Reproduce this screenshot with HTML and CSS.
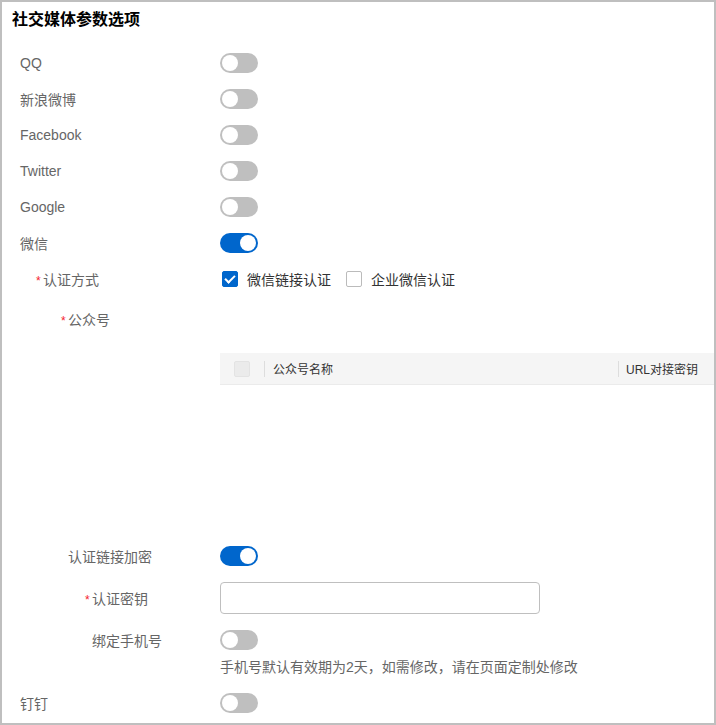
FILE: index.html
```html
<!DOCTYPE html>
<html lang="zh-CN">
<head>
  <meta charset="UTF-8">
  <meta name="viewport" content="width=device-width, initial-scale=1.0">
  <title>社交媒体参数选项</title>
  <link rel="stylesheet" href="styles.css">
</head>
<body>
  <div class="panel">
    <h1>社交媒体参数选项</h1>

    <div class="form-item">
      <label class="form-label">QQ</label>
      <span class="switch"></span>
    </div>
    <div class="form-item">
      <label class="form-label">新浪微博</label>
      <span class="switch"></span>
    </div>
    <div class="form-item">
      <label class="form-label">Facebook</label>
      <span class="switch"></span>
    </div>
    <div class="form-item">
      <label class="form-label">Twitter</label>
      <span class="switch"></span>
    </div>
    <div class="form-item">
      <label class="form-label">Google</label>
      <span class="switch"></span>
    </div>
    <div class="form-item">
      <label class="form-label">微信</label>
      <span class="switch on"></span>
    </div>

    <!-- 微信子选项 -->
    <div class="form-item">
      <label class="form-label indent-1"><span class="req">*</span>认证方式</label>
      <div class="check-group">
        <span class="checkbox checked"></span>
        <span class="check-text">微信链接认证</span>
        <span class="checkbox"></span>
        <span class="check-text">企业微信认证</span>
      </div>
    </div>

    <div class="form-block">
      <label class="form-label indent-2"><span class="req">*</span>公众号</label>
      <div class="table-wrap">
        <div class="table-head">
          <div class="cell cell-check"><span class="checkbox disabled"></span></div>
          <div class="cell cell-name">公众号名称</div>
          <div class="cell cell-key">URL对接密钥</div>
        </div>
        <div class="table-body"></div>
      </div>
    </div>

    <div class="form-item">
      <label class="form-label indent-2">认证链接加密</label>
      <span class="switch on"></span>
    </div>
    <div class="form-item spaced">
      <label class="form-label indent-3"><span class="req">*</span>认证密钥</label>
      <input type="text" class="text-input">
    </div>
    <div class="form-item spaced">
      <label class="form-label indent-3">绑定手机号</label>
      <span class="switch"></span>
    </div>
    <div class="hint">手机号默认有效期为2天，如需修改，请在页面定制处修改</div>

    <div class="form-item last">
      <label class="form-label">钉钉</label>
      <span class="switch"></span>
    </div>
  </div>
</body>
</html>
```

FILE: styles.css
```css
html, body {
  margin: 0;
  padding: 0;
  background-color: #fff;
}
body {
  font-family: "Liberation Sans", Arial, "Noto Sans CJK SC", sans-serif;
  font-size: 14px;
  color: #666;
}
.panel {
  box-sizing: border-box;
  width: 716px;
  height: 725px;
  border: 2px solid #bfbfbf;
  overflow: hidden;
}
h1 {
  margin: 0 0 7px;
  padding-left: 10px;
  height: 36px;
  line-height: 36px;
  font-size: 16px;
  font-weight: bold;
  color: #000;
}
.form-item {
  display: flex;
  align-items: center;
  height: 36px;
}
.form-item.spaced {
  margin-top: 6px;
}
.form-item.last {
  margin-top: 9px;
}
.form-label {
  box-sizing: border-box;
  width: 218px;
  padding-left: 18px;
  flex-shrink: 0;
  color: #666;
}
.form-label.indent-1 {
  padding-left: 41px;
}
.form-label.indent-2 {
  padding-left: 66px;
}
.form-label.indent-3 {
  padding-left: 90px;
}
.req {
  display: inline-block;
  width: 7px;
  margin-left: -7px;
  color: #f5222d;
  font-size: 12px;
}
.switch {
  position: relative;
  display: inline-block;
  width: 38px;
  height: 20px;
  border-radius: 10px;
  background-color: #bfbfbf;
}
.switch::after {
  content: "";
  position: absolute;
  top: 2px;
  left: 2px;
  width: 16px;
  height: 16px;
  border-radius: 50%;
  background-color: #fff;
}
.switch.on {
  background-color: #0066cc;
}
.switch.on::after {
  left: 20px;
}
.check-group {
  display: flex;
  align-items: center;
  padding-left: 2px;
}
.checkbox {
  box-sizing: border-box;
  display: inline-block;
  position: relative;
  width: 16px;
  height: 16px;
  border: 1px solid #bbb;
  border-radius: 2px;
  background-color: #fff;
}
.checkbox.checked {
  border-color: #0066cc;
  background-color: #0066cc;
}
.checkbox.checked::after {
  content: "";
  position: absolute;
  left: 4px;
  top: 1px;
  width: 4px;
  height: 8px;
  border: solid #fff;
  border-width: 0 2px 2px 0;
  transform: rotate(45deg);
}
.checkbox.disabled {
  border-color: #e3e3e3;
  background-color: #ebebeb;
}
.check-text {
  margin: 0 15px 0 9px;
  color: #333;
}
.form-block {
  padding-top: 5px;
}
.form-block .form-label {
  display: block;
  height: 36px;
  line-height: 36px;
}
.table-wrap {
  margin: 15px 0 0 218px;
  height: 185px;
}
.table-head {
  display: flex;
  align-items: center;
  height: 31px;
  background-color: #f5f5f5;
  border-bottom: 1px solid #ebebeb;
  font-size: 12px;
  color: #333;
}
.cell {
  box-sizing: border-box;
  display: flex;
  align-items: center;
  height: 16px;
}
.cell-check {
  width: 44px;
  padding-left: 14px;
}
.cell-name {
  width: 354px;
  padding-left: 8px;
  border-left: 1px solid #ddd;
}
.cell-key {
  flex: 1;
  padding-left: 7px;
  border-left: 1px solid #ddd;
  white-space: nowrap;
}
.text-input {
  box-sizing: border-box;
  width: 320px;
  height: 32px;
  margin: 0;
  padding: 0 8px;
  border: 1px solid #bfbfbf;
  border-radius: 4px;
  font-size: 14px;
  outline: none;
}
.hint {
  margin-left: 218px;
  height: 18px;
  line-height: 18px;
  color: #666;
}
```
